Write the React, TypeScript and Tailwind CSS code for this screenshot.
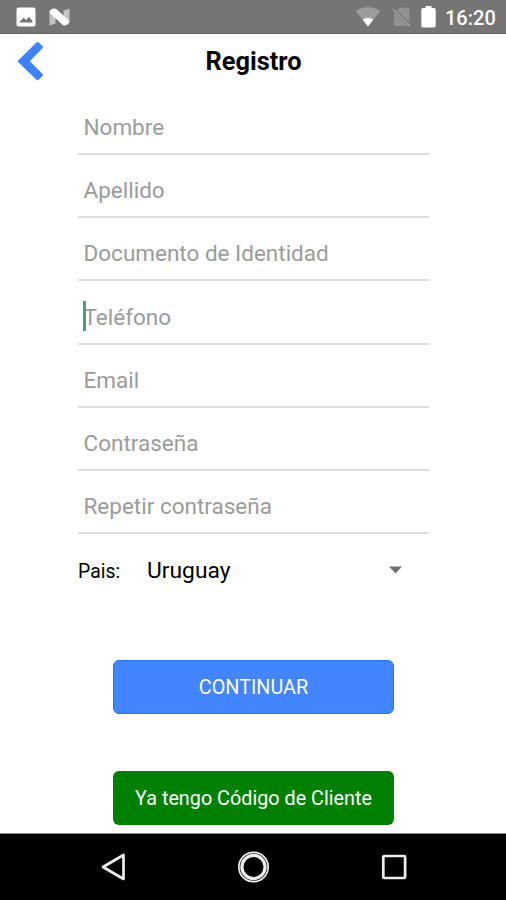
import { useState } from "react";

type Field = {
  name: string;
  placeholder: string;
  type?: string;
  focused?: boolean;
};

const fields: Field[] = [
  { name: "nombre", placeholder: "Nombre" },
  { name: "apellido", placeholder: "Apellido" },
  { name: "documento", placeholder: "Documento de Identidad" },
  { name: "telefono", placeholder: "Teléfono", type: "tel", focused: true },
  { name: "email", placeholder: "Email", type: "email" },
  { name: "password", placeholder: "Contraseña", type: "password" },
  { name: "password2", placeholder: "Repetir contraseña", type: "password" },
];

function StatusBar() {
  return (
    <div className="flex h-[34px] shrink-0 items-center border-b border-[#5f5f5f] bg-[#757575] text-white">
      <svg className="ml-4 h-5 w-5" viewBox="0 0 20 20">
        <path
          fill="currentColor"
          fillRule="evenodd"
          d="M2.5 .5h15a2 2 0 0 1 2 2v15a2 2 0 0 1-2 2h-15a2 2 0 0 1-2-2v-15a2 2 0 0 1 2-2zM3.5 15.5h13v-1.7l-3.6-4-2.6 3.3-2.7-2.3-4.1 4.2z"
        />
      </svg>
      <svg className="ml-[13px] h-[18px] w-[21px]" viewBox="0 0 21 18">
        <path fill="#c4c4c4" d="M.5 3h6v12.5L.5 17.5zM14.5 2.5l6-1.7v13h-6z" />
        <path
          fill="#fff"
          d="M.5 4.5Q1 1 4.5 .6q2-.2 3.7 1.2L20.5 13.3q-.8 3.5-4 4.1-2 .3-3.7-1.2z"
        />
      </svg>
      <svg className="ml-auto h-5 w-6" viewBox="0 0 24 20">
        <path fill="#9e9e9e" d="M0 4.2C7-1 17-1 24 4.2L12 19.5z" />
        <path fill="#fff" d="M6.6 12.6c3-2.2 7.8-2.2 10.8 0L12 19.5z" />
      </svg>
      <svg className="ml-3 h-5 w-[19px]" viewBox="0 0 19 20">
        <path
          fill="#929292"
          d="M7.4.8h8.8q1.2 0 1.2 1.2v13.6L4.8 3.4zM2 5.2 16 19H3.2q-1.2 0-1.2-1.2z"
        />
        <path stroke="#a3a3a3" strokeWidth="1.6" d="M1 2.2 18 19.2" />
      </svg>
      <svg className="ml-[10px] h-[22px] w-[15px]" viewBox="0 0 15 22">
        <path
          fill="currentColor"
          d="M4.5 0h6v2H13a1.7 1.7 0 0 1 1.7 1.7v16A1.7 1.7 0 0 1 13 21.4H2A1.7 1.7 0 0 1 .3 19.7v-16A1.7 1.7 0 0 1 2 2h2.5z"
        />
      </svg>
      <span className="ml-[9px] mr-[10px] mt-0.5 w-[51px] whitespace-nowrap text-[20px] leading-6 font-medium">
        16:20
      </span>
    </div>
  );
}

function NavBar() {
  return (
    <nav className="flex h-[67px] shrink-0 items-center border-t border-[#8a8a8a] bg-black px-[97px] text-[#eee]">
      <svg className="h-8 w-8" viewBox="0 0 32 32" fill="none" stroke="currentColor">
        <path strokeWidth="2.7" strokeLinejoin="round" d="M26.5 4v24L6 16z" />
      </svg>
      <svg className="mx-auto h-8 w-8" viewBox="0 0 32 32" fill="none" stroke="currentColor">
        <circle cx="16.5" cy="16" r="14.7" strokeWidth="1.7" />
        <circle cx="16.5" cy="16" r="11.6" strokeWidth="3.2" />
      </svg>
      <svg className="h-8 w-8" viewBox="0 0 32 32" fill="none" stroke="currentColor">
        <rect x="6.3" y="5" width="21.8" height="22" rx="1" strokeWidth="2.7" />
      </svg>
    </nav>
  );
}

function TextField({ field }: { field: Field }) {
  return (
    <div className="relative flex h-[63.25px] items-end border-b-2 border-[#dedede]">
      {field.focused && (
        <span className="absolute bottom-[12px] left-[5px] h-[30px] w-[3px] bg-[#4f9a80]" />
      )}
      <input
        type={field.type ?? "text"}
        name={field.name}
        placeholder={field.placeholder}
        className="mb-[10px] h-8 w-full bg-transparent pl-[5.5px] text-[22.5px] leading-8 text-black outline-none placeholder:text-[#9b9b9b]"
      />
    </div>
  );
}

export default function App() {
  const [country] = useState("Uruguay");

  return (
    <div className="flex h-[900px] w-[506px] flex-col overflow-hidden bg-white font-[Roboto,sans-serif]">
      <StatusBar />

      <header className="flex h-[57.5px] shrink-0 items-center">
        <button type="button" aria-label="Volver" className="ml-4 mt-[-4px] w-8">
          <svg className="h-10 w-8" viewBox="0 0 32 40">
            <path
              fill="#3c82f9"
              d="M20.7 1.2q.8-.6 1.6 0l4.3 4.1q.8.8 0 1.6L13.8 20.2l12.8 12.9q.8.8 0 1.6l-4.3 4.2q-.8.6-1.6 0L2.2 21q-.8-.8 0-1.6z"
            />
          </svg>
        </button>
        <h1 className="mr-[47px] -mt-1 flex-1 text-center text-[25.4px] leading-8 font-bold text-black">
          Registro
        </h1>
      </header>

      <form
        className="flex flex-1 flex-col pl-[78px]"
        onSubmit={(event) => event.preventDefault()}
      >
        <div className="w-[351px]">
          {fields.map((field) => (
            <TextField key={field.name} field={field} />
          ))}
        </div>

        <div className="mt-[17.5px] flex h-9 w-[351px] items-center text-black">
          <span className="w-[69px] pt-1 text-[19.4px]">Pais:</span>
          <button type="button" className="flex flex-1 items-center text-left">
            <span className="flex-1 pt-0.5 text-[22.8px] leading-8">{country}</span>
            <svg className="mr-[26px] h-2 w-[15px]" viewBox="0 0 15 8">
              <path fill="#6f6f6f" d="M1 .5h13L7.5 7.5z" />
            </svg>
          </button>
        </div>

        <div className="ml-[35px] mt-[72px] flex w-[281px] flex-col gap-[57px] text-[19.8px] text-white">
          <button
            type="submit"
            className="h-[54px] rounded-[6px] border border-[#1f76f5] bg-[#4285ff] pt-[3px]"
          >
            CONTINUAR
          </button>
          <button type="button" className="h-[54px] rounded-[6px] bg-[#008000] pt-[3px]">
            Ya tengo Código de Cliente
          </button>
        </div>
      </form>

      <NavBar />
    </div>
  );
}
